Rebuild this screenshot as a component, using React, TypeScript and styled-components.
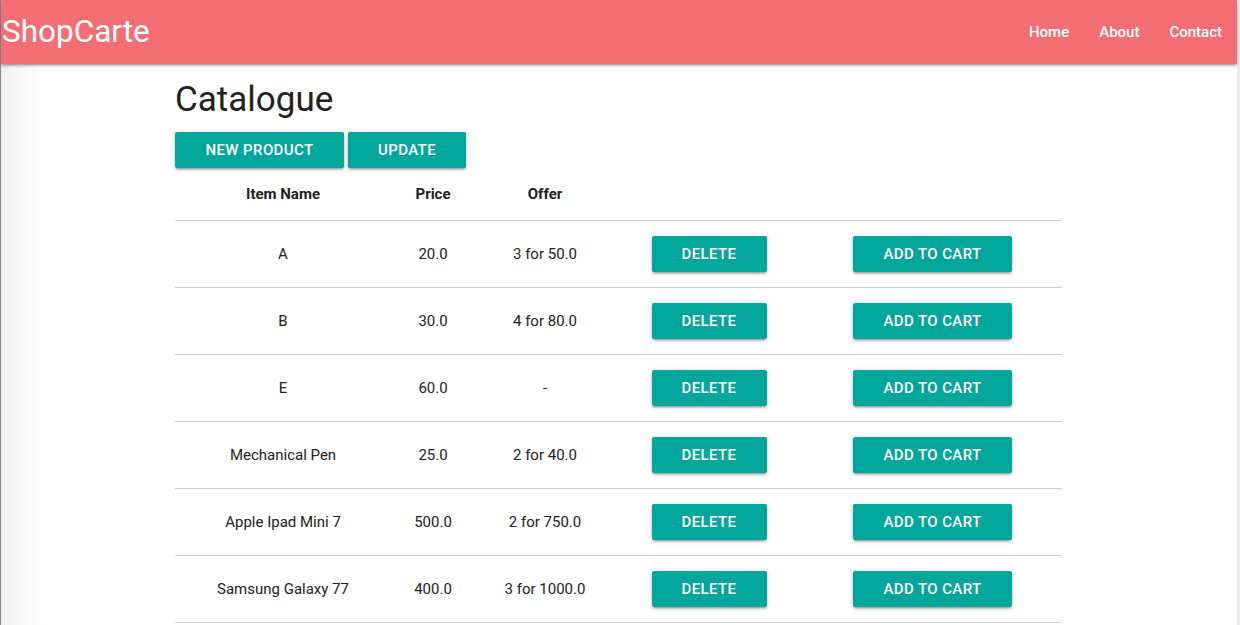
import React from "react";
import styled, { createGlobalStyle } from "styled-components";

const GlobalStyle = createGlobalStyle`
  html, body {
    margin: 0;
    padding: 0;
  }
  body {
    font-family: Roboto, "Noto Sans", Arial, sans-serif;
    color: #212121;
    background: linear-gradient(to right, #f0f0f0 0px, #ffffff 44px);
    min-height: 625px;
  }
`;

const Frame = styled.div`
  display: flex;
  min-height: 625px;
  border-left: 1px solid #8c8c8c;
  border-right: 3px solid #ececec;
  box-sizing: border-box;
  width: 1240px;
`;

const Page = styled.div`
  flex: 1;
  display: flex;
  flex-direction: column;
`;

const NavBar = styled.nav`
  height: 64px;
  background: #f36e74;
  display: flex;
  align-items: center;
  justify-content: space-between;
  box-shadow: 0 2px 2px 0 rgba(0, 0, 0, 0.14), 0 3px 1px -2px rgba(0, 0, 0, 0.12),
    0 1px 5px 0 rgba(0, 0, 0, 0.2);
  position: relative;
  z-index: 1;
`;

const Brand = styled.a`
  color: #fff;
  font-size: 31.5px;
  line-height: 64px;
  padding-left: 1px;
  text-decoration: none;
`;

const NavLinks = styled.ul`
  list-style: none;
  margin: 0;
  padding: 0;
  display: flex;
`;

const NavLink = styled.a`
  display: block;
  color: #fff;
  font-size: 15px;
  font-weight: 500;
  padding: 0 15px;
  line-height: 64px;
  text-decoration: none;
`;

const Container = styled.main`
  width: 887px;
  margin-left: 174px;
  display: flex;
  flex-direction: column;
`;

const Title = styled.h1`
  font-size: 35px;
  font-weight: 400;
  line-height: 40px;
  margin: 16px 0 12px;
  color: #212121;
`;

const Toolbar = styled.div`
  display: flex;
  gap: 4px;
`;

const Button = styled.button<{ $w: number }>`
  width: ${(p) => p.$w}px;
  height: 36px;
  border: none;
  border-radius: 2px;
  background: #03a69a;
  color: #fff;
  font-family: Roboto, Arial, sans-serif;
  font-size: 15px;
  font-weight: 500;
  letter-spacing: 0.4px;
  text-transform: uppercase;
  padding: 0;
  cursor: pointer;
  box-shadow: 0 2px 2px 0 rgba(0, 0, 0, 0.14), 0 3px 1px -2px rgba(0, 0, 0, 0.12),
    0 1px 5px 0 rgba(0, 0, 0, 0.2);
`;

const Row = styled.div<{ $head?: boolean }>`
  display: grid;
  grid-template-columns: 216px 84px 140px 188px 259px;
  height: ${(p) => (p.$head ? 52 : 66)}px;
  border-bottom: 1px solid #d0d0d0;
  align-items: center;
`;

const Cell = styled.div<{ $head?: boolean }>`
  display: flex;
  justify-content: center;
  align-items: center;
  font-size: 15px;
  font-weight: ${(p) => (p.$head ? 700 : 400)};
  color: #212121;
`;

const products = [
  { name: "A", price: "20.0", offer: "3 for 50.0" },
  { name: "B", price: "30.0", offer: "4 for 80.0" },
  { name: "E", price: "60.0", offer: "-" },
  { name: "Mechanical Pen", price: "25.0", offer: "2 for 40.0" },
  { name: "Apple Ipad Mini 7", price: "500.0", offer: "2 for 750.0" },
  { name: "Samsung Galaxy 77", price: "400.0", offer: "3 for 1000.0" },
];

export default function App() {
  return (
    <>
      <GlobalStyle />
      <Frame>
        <Page>
          <NavBar>
            <Brand href="#">ShopCarte</Brand>
            <NavLinks>
              <li><NavLink href="#">Home</NavLink></li>
              <li><NavLink href="#">About</NavLink></li>
              <li><NavLink href="#">Contact</NavLink></li>
            </NavLinks>
          </NavBar>
          <Container>
            <Title>Catalogue</Title>
            <Toolbar>
              <Button $w={169}>New Product</Button>
              <Button $w={118}>Update</Button>
            </Toolbar>
            <Row $head>
              <Cell $head>Item Name</Cell>
              <Cell $head>Price</Cell>
              <Cell $head>Offer</Cell>
              <Cell />
              <Cell />
            </Row>
            {products.map((p) => (
              <Row key={p.name}>
                <Cell>{p.name}</Cell>
                <Cell>{p.price}</Cell>
                <Cell>{p.offer}</Cell>
                <Cell>
                  <Button $w={115}>Delete</Button>
                </Cell>
                <Cell>
                  <Button $w={159}>Add to cart</Button>
                </Cell>
              </Row>
            ))}
          </Container>
        </Page>
      </Frame>
    </>
  );
}
